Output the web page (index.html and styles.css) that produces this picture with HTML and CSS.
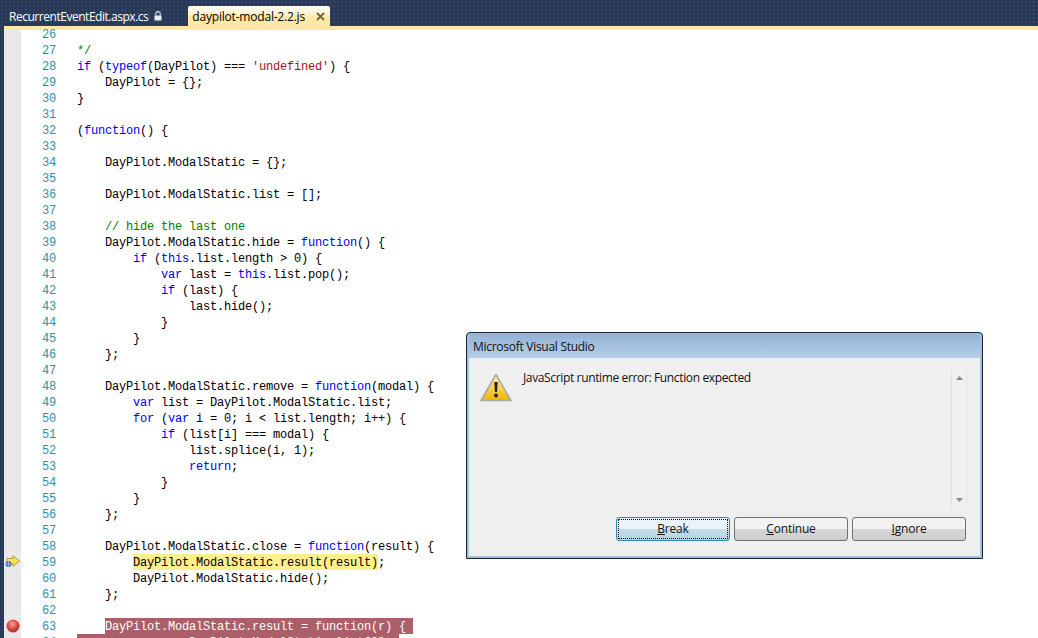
FILE: index.html
```html
<!DOCTYPE html>
<html lang="en">
<head>
    <meta charset="UTF-8">
    <title>daypilot-modal-2.2.js - Microsoft Visual Studio</title>
    <link rel="stylesheet" href="styles.css">
</head>
<body>
    <div class="tabs">
        <div class="tab">
            <span class="tab-name">RecurrentEventEdit.aspx.cs</span>
            <svg class="lock" width="8" height="10" viewBox="0 0 8 10">
                <path d="M1.8 4.5V2.8a2.2 2.2 0 0 1 4.4 0V4.5" fill="none" stroke="#d8dfea" stroke-width="1.1"/>
                <rect x="0.5" y="4.5" width="7" height="5" fill="#e8edf5"/>
            </svg>
        </div>
        <div class="tab tab-active">
            <span>daypilot-modal-2.2.js</span>
            <svg class="close" width="9" height="9" viewBox="0 0 9 9">
                <path d="M1 1l7 7M8 1L1 8" stroke="#75633f" stroke-width="1.8" fill="none"/>
            </svg>
        </div>
    </div>

    <div class="editor">
        <div class="margin">
            <svg class="arrow" width="16" height="13" viewBox="0 0 16 13">
                <path d="M2 3.5h6V.8L14.5 6 8 11.2V8.5H2z" fill="#ffe44d" stroke="#a08a20" stroke-width="0.8"/>
                <circle cx="3.5" cy="9" r="3" fill="#3f6fb8"/>
                <path d="M.8 9h5.4M3.5 6.2v5.6" stroke="#bcd0ee" stroke-width="0.7"/>
            </svg>
            <svg class="dot" width="14" height="14" viewBox="0 0 14 14">
                <defs>
                    <radialGradient id="ball" cx="0.45" cy="0.35" r="0.7">
                        <stop offset="0" stop-color="#f2a9a0"/>
                        <stop offset="0.55" stop-color="#d8473f"/>
                        <stop offset="1" stop-color="#a52a26"/>
                    </radialGradient>
                </defs>
                <circle cx="7" cy="7" r="6.5" fill="url(#ball)"/>
            </svg>
        </div>
        <div class="code">
            <div class="line"><i>26</i></div>
            <div class="line"><i>27</i><span class="c">*/</span></div>
            <div class="line"><i>28</i><b>if</b> (<b>typeof</b>(DayPilot) === <u>'undefined'</u>) {</div>
            <div class="line"><i>29</i>    DayPilot = {};</div>
            <div class="line"><i>30</i>}</div>
            <div class="line"><i>31</i></div>
            <div class="line"><i>32</i>(<b>function</b>() {</div>
            <div class="line"><i>33</i></div>
            <div class="line"><i>34</i>    DayPilot.ModalStatic = {};</div>
            <div class="line"><i>35</i></div>
            <div class="line"><i>36</i>    DayPilot.ModalStatic.list = [];</div>
            <div class="line"><i>37</i></div>
            <div class="line"><i>38</i>    <span class="c">// hide the last one</span></div>
            <div class="line"><i>39</i>    DayPilot.ModalStatic.hide = <b>function</b>() {</div>
            <div class="line"><i>40</i>        <b>if</b> (<b>this</b>.list.length &gt; 0) {</div>
            <div class="line"><i>41</i>            <b>var</b> last = <b>this</b>.list.pop();</div>
            <div class="line"><i>42</i>            <b>if</b> (last) {</div>
            <div class="line"><i>43</i>                last.hide();</div>
            <div class="line"><i>44</i>            }</div>
            <div class="line"><i>45</i>        }</div>
            <div class="line"><i>46</i>    };</div>
            <div class="line"><i>47</i></div>
            <div class="line"><i>48</i>    DayPilot.ModalStatic.remove = <b>function</b>(modal) {</div>
            <div class="line"><i>49</i>        <b>var</b> list = DayPilot.ModalStatic.list;</div>
            <div class="line"><i>50</i>        <b>for</b> (<b>var</b> i = 0; i &lt; list.length; i++) {</div>
            <div class="line"><i>51</i>            <b>if</b> (list[i] === modal) {</div>
            <div class="line"><i>52</i>                list.splice(i, 1);</div>
            <div class="line"><i>53</i>                <b>return</b>;</div>
            <div class="line"><i>54</i>            }</div>
            <div class="line"><i>55</i>        }</div>
            <div class="line"><i>56</i>    };</div>
            <div class="line"><i>57</i></div>
            <div class="line"><i>58</i>    DayPilot.ModalStatic.close = <b>function</b>(result) {</div>
            <div class="line"><i>59</i>        <span class="current">DayPilot.ModalStatic.result(result)</span>;</div>
            <div class="line"><i>60</i>        DayPilot.ModalStatic.hide();</div>
            <div class="line"><i>61</i>    };</div>
            <div class="line"><i>62</i></div>
            <div class="line"><i>63</i>    <span class="brk">DayPilot.ModalStatic.result = function(r) { </span></div>
            <div class="line"><i>64</i><span class="brk">        var m = DayPilot.ModalStatic.list[0]; </span></div>
        </div>
    </div>

    <div class="dialog">
        <div class="dialog-title">Microsoft Visual Studio</div>
        <div class="dialog-body">
            <div class="message">
                <svg class="warn" width="32" height="29" viewBox="0 0 32 29">
                    <defs>
                        <linearGradient id="amber" x1="0" y1="0" x2="0" y2="1">
                            <stop offset="0" stop-color="#fff3a8"/>
                            <stop offset="1" stop-color="#f0b400"/>
                        </linearGradient>
                    </defs>
                    <path d="M16 1.5L31 27.5H1z" fill="url(#amber)" stroke="#a9a9a9" stroke-width="1.6" stroke-linejoin="round"/>
                    <path d="M14.3 9h3.4l-.7 10h-2z" fill="#222"/>
                    <circle cx="16" cy="22.5" r="1.9" fill="#222"/>
                </svg>
                <p class="message-text">JavaScript runtime error: Function expected</p>
                <div class="scroller">
                    <svg width="7" height="4" viewBox="0 0 9 5"><path d="M4.5 0L9 5H0z" fill="#888"/></svg>
                    <svg width="7" height="4" viewBox="0 0 9 5"><path d="M0 0h9L4.5 5z" fill="#888"/></svg>
                </div>
            </div>
            <div class="buttons">
                <button class="btn btn-default"><span class="focus"><u>B</u>reak</span></button>
                <button class="btn"><u>C</u>ontinue</button>
                <button class="btn"><u>I</u>gnore</button>
            </div>
        </div>
    </div>
</body>
</html>
```

FILE: styles.css
```css
html, body {
    height: 100%;
    margin: 0;
}

body {
    position: relative;
    display: flex;
    flex-direction: column;
    overflow: hidden;
    background-color: #293955;
    background-image: radial-gradient(#31446a 1px, transparent 1px);
    background-size: 4px 4px;
    font-family: "Open Sans", "Noto Sans", sans-serif;
}

.tabs {
    display: flex;
    align-items: flex-end;
    height: 26px;
    flex: none;
}

.tab {
    display: flex;
    align-items: center;
    gap: 6px;
    height: 20px;
    padding: 0 0 0 9px;
    color: #fff;
    font-size: 12px;
    letter-spacing: -0.2px;
}

.tab-name {
    letter-spacing: -0.47px;
}

.tab-active {
    gap: 11px;
    margin-left: 26px;
    padding: 0 5px 0 4px;
    border-radius: 2px 2px 0 0;
    background: linear-gradient(#fffdf8, #fff0c8 45%, #ffe8a6 50%);
    color: #000;
}

.editor {
    flex: 1;
    display: flex;
    margin-left: 4px;
    border-top: 4px solid #ffe8a6;
    background-color: #fff;
    min-height: 0;
}

.margin {
    position: relative;
    flex: none;
    width: 17px;
    background-color: #e9e9e9;
}

.arrow {
    position: absolute;
    left: 1px;
    top: 525px;
}

.dot {
    position: absolute;
    left: 2px;
    top: 589px;
}

.code {
    flex: 1;
    margin-top: -4px;
    font-family: "Liberation Mono", monospace;
    font-size: 12px;
    letter-spacing: -0.2px;
    color: #000;
    overflow: hidden;
}

.line {
    height: 16px;
    line-height: 18px;
    white-space: pre;
}

.line i {
    display: inline-block;
    width: 35px;
    margin-right: 21px;
    font-style: normal;
    text-align: right;
    color: #2b91af;
}

.line b {
    font-weight: normal;
    color: #0000ff;
}

.line u {
    text-decoration: none;
    color: #a31515;
}

.c {
    color: #008000;
}

.current,
.brk {
    display: inline-block;
    height: 16px;
    vertical-align: top;
}

.current {
    background-color: #fff08c;
}

.brk {
    background-color: #ab5f69;
    color: #fff;
}

.dialog {
    position: absolute;
    left: 466px;
    top: 332px;
    width: 517px;
    height: 227px;
    box-sizing: border-box;
    display: flex;
    flex-direction: column;
    border: 1px solid #1b2430;
    border-radius: 4px 4px 0 0;
    box-shadow: inset 0 0 0 1px #8fc3dc;
    background-color: #a9c5e2;
    padding: 1px 2px 2px 2px;
}

.dialog-title {
    flex: none;
    height: 23px;
    padding: 1px 0 0 4px;
    background: linear-gradient(#93b2d4, #b6cfe8);
    font-size: 12px;
    line-height: 23px;
    letter-spacing: -0.28px;
    color: #111;
}

.dialog-body {
    flex: 1;
    display: flex;
    flex-direction: column;
    padding: 9px 14px 15px 11px;
    background-color: #efefef;
}

.message {
    flex: 1;
    display: flex;
    align-items: flex-start;
}

.warn {
    flex: none;
    margin: 6px 10px 0 0;
}

.message-text {
    flex: 1;
    margin: 2px 0 0;
    padding-left: 1px;
    font-size: 12px;
    line-height: 18px;
    letter-spacing: -0.36px;
    color: #111;
}

.scroller {
    flex: none;
    display: flex;
    flex-direction: column;
    justify-content: space-between;
    align-items: center;
    box-sizing: border-box;
    width: 16px;
    height: 138px;
    margin: 3px -1px 0 0;
    padding: 6px 0;
    border-left: 1px solid #e2e2e2;
    border-right: 1px solid #e6e6e6;
}

.buttons {
    flex: none;
    display: flex;
    justify-content: flex-end;
    gap: 4px;
}

.btn {
    width: 114px;
    height: 24px;
    padding: 0 0 1px;
    border: 1px solid #707070;
    border-radius: 3px;
    background: linear-gradient(#f2f2f2 48%, #d6d6d6 52%, #cfcfcf);
    font-family: inherit;
    font-size: 12px;
    letter-spacing: -0.2px;
    color: #111;
}

.btn-default {
    display: flex;
    padding: 1px;
    border-color: #2c8cb4;
    background: linear-gradient(#eaf3f8 48%, #c4dcea 52%, #b8d4e4);
}

.focus {
    flex: 1;
    line-height: 18px;
    border: 1px dotted #111;
}
```
